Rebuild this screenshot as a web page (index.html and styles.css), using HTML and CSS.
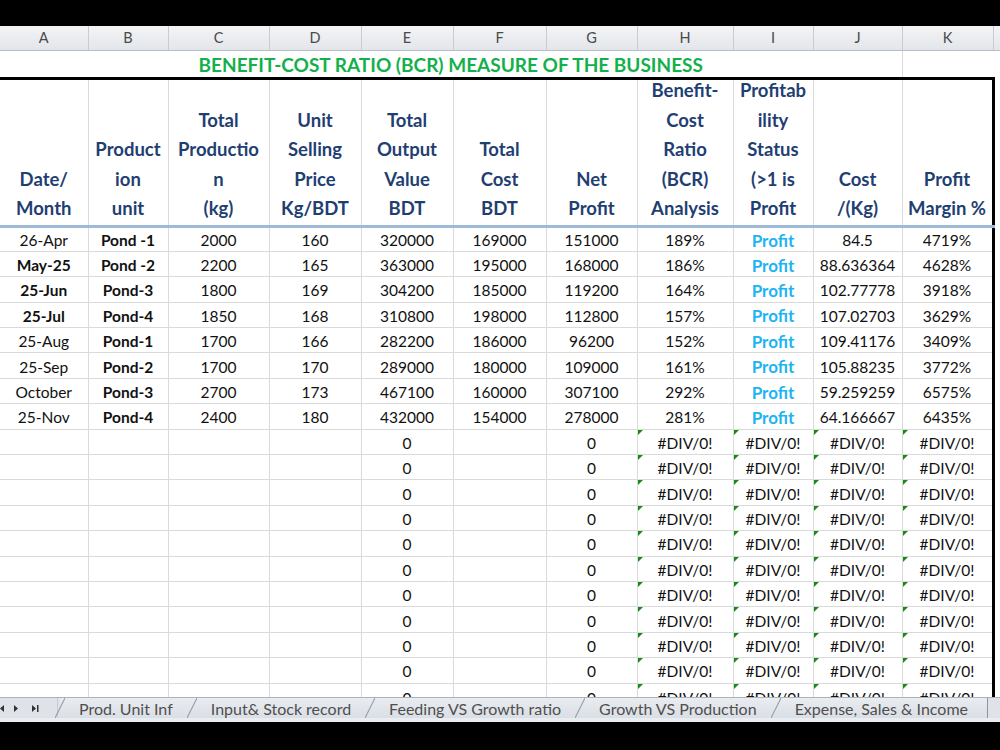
FILE: index.html
```html
<!DOCTYPE html>
<html lang="en">
<head>
    <meta charset="UTF-8">
    <title>BCR Measure</title>
    <link rel="stylesheet" href="styles.css">
</head>
<body>
    <div class="window">
        <div class="sheet">
            <table class="grid">
                <colgroup>
                    <col class="w-a"><col class="w-b"><col class="w-c"><col class="w-d">
                    <col class="w-e"><col class="w-f"><col class="w-g"><col class="w-h">
                    <col class="w-i"><col class="w-j"><col class="w-k"><col class="w-x">
                </colgroup>
                <thead>
                    <tr class="letters">
                        <th>A</th><th>B</th><th>C</th><th>D</th><th>E</th><th>F</th>
                        <th>G</th><th>H</th><th>I</th><th>J</th><th>K</th><th class="filler"></th>
                    </tr>
                </thead>
                <tbody>
                    <tr class="title-row">
                        <td colspan="10" class="title">BENEFIT-COST RATIO (BCR) MEASURE OF THE BUSINESS</td>
                        <td class="plain"></td>
                        <td class="filler"></td>
                    </tr>
                    <tr class="head-row">
                        <th><div class="hd">Date/<br>Month</div></th>
                        <th><div class="hd">Product<br>ion<br>unit</div></th>
                        <th><div class="hd">Total<br>Productio<br>n<br>(kg)</div></th>
                        <th><div class="hd">Unit<br>Selling<br>Price<br>Kg/BDT</div></th>
                        <th><div class="hd">Total<br>Output<br>Value<br>BDT</div></th>
                        <th><div class="hd">Total<br>Cost<br>BDT</div></th>
                        <th><div class="hd">Net<br>Profit</div></th>
                        <th><div class="hd">Benefit-<br>Cost<br>Ratio<br>(BCR)<br>Analysis</div></th>
                        <th><div class="hd">Profitab<br>ility<br>Status<br>(&gt;1 is<br>Profit</div></th>
                        <th><div class="hd">Cost<br>/(Kg)</div></th>
                        <th class="edge"><div class="hd">Profit<br>Margin %</div></th>
                        <td class="filler"></td>
                    </tr>
                    <tr>
                        <td>26-Apr</td><td class="b">Pond -1</td><td>2000</td><td>160</td><td>320000</td><td>169000</td>
                        <td>151000</td><td>189%</td><td class="ok">Profit</td><td>84.5</td><td class="edge">4719%</td><td class="filler"></td>
                    </tr>
                    <tr>
                        <td class="b">May-25</td><td class="b">Pond -2</td><td>2200</td><td>165</td><td>363000</td><td>195000</td>
                        <td>168000</td><td>186%</td><td class="ok">Profit</td><td>88.636364</td><td class="edge">4628%</td><td class="filler"></td>
                    </tr>
                    <tr>
                        <td class="b">25-Jun</td><td class="b">Pond-3</td><td>1800</td><td>169</td><td>304200</td><td>185000</td>
                        <td>119200</td><td>164%</td><td class="ok">Profit</td><td>102.77778</td><td class="edge">3918%</td><td class="filler"></td>
                    </tr>
                    <tr>
                        <td class="b">25-Jul</td><td class="b">Pond-4</td><td>1850</td><td>168</td><td>310800</td><td>198000</td>
                        <td>112800</td><td>157%</td><td class="ok">Profit</td><td>107.02703</td><td class="edge">3629%</td><td class="filler"></td>
                    </tr>
                    <tr>
                        <td>25-Aug</td><td class="b">Pond-1</td><td>1700</td><td>166</td><td>282200</td><td>186000</td>
                        <td>96200</td><td>152%</td><td class="ok">Profit</td><td>109.41176</td><td class="edge">3409%</td><td class="filler"></td>
                    </tr>
                    <tr>
                        <td>25-Sep</td><td class="b">Pond-2</td><td>1700</td><td>170</td><td>289000</td><td>180000</td>
                        <td>109000</td><td>161%</td><td class="ok">Profit</td><td>105.88235</td><td class="edge">3772%</td><td class="filler"></td>
                    </tr>
                    <tr>
                        <td>October</td><td class="b">Pond-3</td><td>2700</td><td>173</td><td>467100</td><td>160000</td>
                        <td>307100</td><td>292%</td><td class="ok">Profit</td><td>59.259259</td><td class="edge">6575%</td><td class="filler"></td>
                    </tr>
                    <tr>
                        <td>25-Nov</td><td class="b">Pond-4</td><td>2400</td><td>180</td><td>432000</td><td>154000</td>
                        <td>278000</td><td>281%</td><td class="ok">Profit</td><td>64.166667</td><td class="edge">6435%</td><td class="filler"></td>
                    </tr>
                    <tr><td></td><td></td><td></td><td></td><td>0</td><td></td><td>0</td><td class="err">#DIV/0!</td><td class="err">#DIV/0!</td><td class="err">#DIV/0!</td><td class="err edge">#DIV/0!</td><td class="filler"></td></tr>
                    <tr><td></td><td></td><td></td><td></td><td>0</td><td></td><td>0</td><td class="err">#DIV/0!</td><td class="err">#DIV/0!</td><td class="err">#DIV/0!</td><td class="err edge">#DIV/0!</td><td class="filler"></td></tr>
                    <tr><td></td><td></td><td></td><td></td><td>0</td><td></td><td>0</td><td class="err">#DIV/0!</td><td class="err">#DIV/0!</td><td class="err">#DIV/0!</td><td class="err edge">#DIV/0!</td><td class="filler"></td></tr>
                    <tr><td></td><td></td><td></td><td></td><td>0</td><td></td><td>0</td><td class="err">#DIV/0!</td><td class="err">#DIV/0!</td><td class="err">#DIV/0!</td><td class="err edge">#DIV/0!</td><td class="filler"></td></tr>
                    <tr><td></td><td></td><td></td><td></td><td>0</td><td></td><td>0</td><td class="err">#DIV/0!</td><td class="err">#DIV/0!</td><td class="err">#DIV/0!</td><td class="err edge">#DIV/0!</td><td class="filler"></td></tr>
                    <tr><td></td><td></td><td></td><td></td><td>0</td><td></td><td>0</td><td class="err">#DIV/0!</td><td class="err">#DIV/0!</td><td class="err">#DIV/0!</td><td class="err edge">#DIV/0!</td><td class="filler"></td></tr>
                    <tr><td></td><td></td><td></td><td></td><td>0</td><td></td><td>0</td><td class="err">#DIV/0!</td><td class="err">#DIV/0!</td><td class="err">#DIV/0!</td><td class="err edge">#DIV/0!</td><td class="filler"></td></tr>
                    <tr><td></td><td></td><td></td><td></td><td>0</td><td></td><td>0</td><td class="err">#DIV/0!</td><td class="err">#DIV/0!</td><td class="err">#DIV/0!</td><td class="err edge">#DIV/0!</td><td class="filler"></td></tr>
                    <tr><td></td><td></td><td></td><td></td><td>0</td><td></td><td>0</td><td class="err">#DIV/0!</td><td class="err">#DIV/0!</td><td class="err">#DIV/0!</td><td class="err edge">#DIV/0!</td><td class="filler"></td></tr>
                    <tr><td></td><td></td><td></td><td></td><td>0</td><td></td><td>0</td><td class="err">#DIV/0!</td><td class="err">#DIV/0!</td><td class="err">#DIV/0!</td><td class="err edge">#DIV/0!</td><td class="filler"></td></tr>
                    <tr class="cut"><td></td><td></td><td></td><td></td><td>0</td><td></td><td>0</td><td class="err">#DIV/0!</td><td class="err">#DIV/0!</td><td class="err">#DIV/0!</td><td class="err edge">#DIV/0!</td><td class="filler"></td></tr>
                </tbody>
            </table>
        </div>

        <div class="tabbar">
            <div class="nav">
                <svg width="48" height="21" viewBox="0 0 48 21">
                    <polygon points="4,7 0,10.5 4,14" fill="#333"/>
                    <polygon points="14,7 18,10.5 14,14" fill="#333"/>
                    <polygon points="32,7 36,10.5 32,14" fill="#333"/>
                    <rect x="37" y="7" width="1.5" height="7" fill="#333"/>
                </svg>
            </div>
            <div class="tab">Prod. Unit Inf</div>
            <div class="tab">Input&amp; Stock record</div>
            <div class="tab">Feeding VS Growth ratio</div>
            <div class="tab">Growth VS Production</div>
            <div class="tab last">Expense, Sales &amp; Income</div>
        </div>
    </div>
</body>
</html>
```

FILE: styles.css
```css
* {
    margin: 0;
    padding: 0;
    box-sizing: border-box;
}

body {
    background: #000;
    font-family: Lato, "Liberation Sans", sans-serif;
}

.window {
    width: 1000px;
    margin-top: 26px;
}

.sheet {
    height: 671px;
    overflow: hidden;
    background: #fff;
}

.grid {
    width: 1000px;
    table-layout: fixed;
    border-collapse: collapse;
}

.w-a { width: 88px; }
.w-b { width: 80px; }
.w-c { width: 101px; }
.w-d { width: 92px; }
.w-e { width: 92px; }
.w-f { width: 93px; }
.w-g { width: 91px; }
.w-h { width: 96px; }
.w-i { width: 80px; }
.w-j { width: 89px; }
.w-k { width: 91px; }
.w-x { width: 7px; }

/* column letters */
.letters {
    height: 24px;
}

.letters th {
    background: linear-gradient(#f3f4f6, #e2e5ea);
    border-right: 1px solid #c9cdd3;
    border-bottom: 1px solid #b8bec7;
    color: #4a4a4a;
    font-weight: normal;
    font-size: 14.5px;
    text-align: center;
}

.letters th.filler {
    border-right: none;
}

/* title */
.title-row {
    height: 28px;
}

.title {
    color: #14b04b;
    font-weight: bold;
    font-size: 19px;
    text-align: center;
    white-space: nowrap;
    padding-top: 2px;
}

.plain {
    border-left: 1px solid #dadada;
}

/* column headings */
.head-row {
    height: 148px;
}

.head-row th {
    border-top: 3px solid #000;
    border-bottom: 3px solid #9fb9d8;
    border-right: 1px solid #dadada;
    vertical-align: bottom;
    color: #1f3f73;
    font-size: 18.5px;
    font-weight: bold;
    text-align: center;
    white-space: nowrap;
}

.hd {
    height: 144px;
    display: flex;
    flex-direction: column;
    justify-content: flex-end;
    line-height: 29.5px;
    padding-bottom: 1px;
}

/* data */
tbody tr {
    height: 25.4px;
}

tbody td {
    border-right: 1px solid #dadada;
    border-bottom: 1px solid #dadada;
    color: #111;
    font-size: 15.5px;
    text-align: center;
    white-space: nowrap;
    overflow: hidden;
    padding-top: 2px;
}

.title-row td {
    border-bottom: none;
    border-right: none;
}

td.b {
    font-weight: bold;
}

td.ok {
    color: #1cb4f2;
    font-weight: bold;
    font-size: 17px;
}

td.err {
    position: relative;
}

td.err::before {
    content: '';
    position: absolute;
    left: 0;
    top: 0;
    border-top: 5px solid #178a17;
    border-right: 5px solid transparent;
}

.grid .edge {
    border-right: 3px solid #000;
}

.grid .filler {
    border: none;
    background: #fff;
}

.letters .filler {
    background: linear-gradient(#f3f4f6, #e2e5ea);
    border-bottom: 1px solid #b8bec7;
}

/* last row is cut by the tab bar */
.cut td {
    vertical-align: top;
    padding-top: 5px;
}

/* sheet tabs */
.tabbar {
    height: 25px;
    display: flex;
    background: #dfe3e9;
    border-top: 1px solid #aab2bd;
    border-bottom: 4px solid #e9ecf0;
    font-size: 16px;
    color: #4f4f4f;
}

.nav {
    width: 58px;
    display: flex;
    align-items: center;
    border-right: 1px solid #c6ccd4;
    margin-right: 2px;
    flex-shrink: 0;
}

.tab {
    position: relative;
    display: flex;
    align-items: center;
    padding: 0 19px;
    white-space: nowrap;
    background: linear-gradient(#e9ecf0, #dadfe6);
}

.tab::before {
    content: '';
    position: absolute;
    left: -5px;
    top: 0;
    bottom: 0;
    width: 10px;
    background: linear-gradient(to bottom right, transparent calc(50% - 1px), #8b95a2 50%, transparent calc(50% + 1px));
}

.tab.last {
    border-right: 1px solid #8b95a2;
}
```
